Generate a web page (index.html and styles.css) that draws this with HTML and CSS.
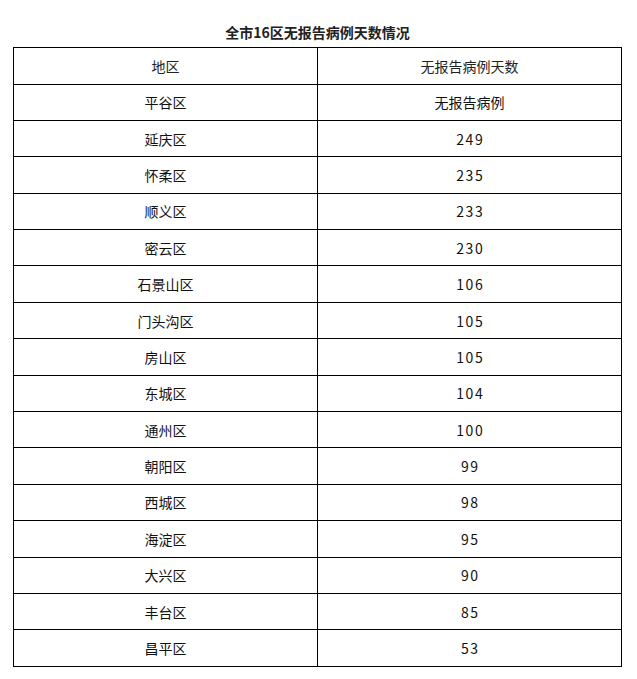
FILE: index.html
```html
<!DOCTYPE html>
<html lang="zh-CN">
<head>
<meta charset="utf-8">
<title>全市16区无报告病例天数情况</title>
<link rel="stylesheet" href="styles.css">
</head>
<body>
<div class="page">
  <h1 class="title">全市16区无报告病例天数情况</h1>
  <table class="data">
    <thead>
      <tr><th>地区</th><th>无报告病例天数</th></tr>
    </thead>
    <tbody>
      <tr><td>平谷区</td><td>无报告病例</td></tr>
      <tr><td>延庆区</td><td class="num">249</td></tr>
      <tr><td>怀柔区</td><td class="num">235</td></tr>
      <tr><td>顺义区</td><td class="num">233</td></tr>
      <tr><td>密云区</td><td class="num">230</td></tr>
      <tr><td>石景山区</td><td class="num">106</td></tr>
      <tr><td>门头沟区</td><td class="num">105</td></tr>
      <tr><td>房山区</td><td class="num">105</td></tr>
      <tr><td>东城区</td><td class="num">104</td></tr>
      <tr><td>通州区</td><td class="num">100</td></tr>
      <tr><td>朝阳区</td><td class="num">99</td></tr>
      <tr><td>西城区</td><td class="num">98</td></tr>
      <tr><td>海淀区</td><td class="num">95</td></tr>
      <tr><td>大兴区</td><td class="num">90</td></tr>
      <tr><td>丰台区</td><td class="num">85</td></tr>
      <tr><td>昌平区</td><td class="num">53</td></tr>
    </tbody>
  </table>
</div>
</body>
</html>
```
FILE: styles.css
```css
html, body {
  margin: 0;
  padding: 0;
  background: #ffffff;
}

body {
  font-family: "Noto Sans CJK SC", "Noto Sans", sans-serif;
  color: #111111;
}

.page {
  padding: 22px 0 0 13px;
}

.title {
  margin: 0 0 5px 0;
  width: 609px;
  font-size: 14px;
  line-height: 20px;
  font-weight: 700;
  text-align: center;
  color: #222222;
}

.data {
  width: 609px;
  border-collapse: collapse;
  table-layout: fixed;
}

.data th,
.data td {
  border: 1px solid #000000;
  height: 35.4px;
  padding: 0;
  text-align: center;
  vertical-align: middle;
  font-size: 14px;
  line-height: 20px;
  font-weight: 400;
}

.data th {
  height: 35.5px;
  color: #222222;
}

.data .num {
  letter-spacing: 1.5px;
  text-indent: 1.5px;
}
```
